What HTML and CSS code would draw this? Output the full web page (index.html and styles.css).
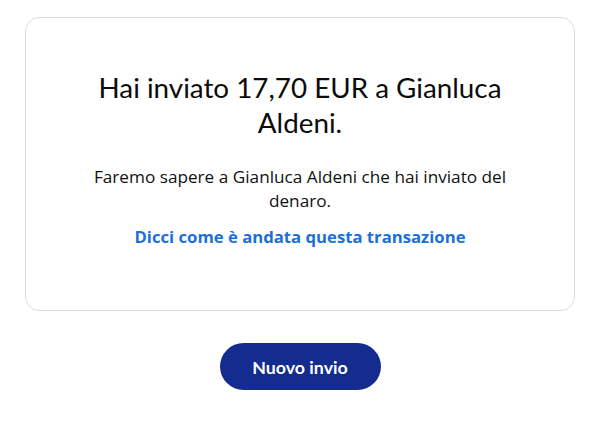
FILE: index.html
```html
<!DOCTYPE html>
<html lang="it">
<head>
<meta charset="utf-8">
<link rel="stylesheet" href="styles.css">
</head>
<body>
<main class="page">
  <section class="card">
    <h1 class="title">Hai inviato 17,70 EUR a Gianluca Aldeni.</h1>
    <p class="text">Faremo sapere a Gianluca Aldeni che hai inviato del denaro.</p>
    <a class="link" href="#">Dicci come è andata questa transazione</a>
  </section>
  <div class="actions">
    <button class="btn" type="button">Nuovo invio</button>
  </div>
</main>
</body>
</html>
```
FILE: styles.css
```css
* { box-sizing: border-box; }
html, body { margin: 0; padding: 0; background: #fff; }
body { font-family: "Open Sans", "Lato", sans-serif; color: #111; }
.page { padding: 17px 25px 0 25px; display: flex; flex-direction: column; }
.card {
  border: 1px solid #dcdcdc;
  border-radius: 14px;
  height: 294px;
  padding: 52px 40px 0 40px;
  display: flex;
  flex-direction: column;
  align-items: center;
  text-align: center;
}
.title {
  margin: 0;
  font-family: "Lato", sans-serif;
  font-size: 27.8px;
  font-weight: 400;
  line-height: 35px;
  max-width: 420px;
  color: #0b0b0b;
}
.text {
  margin: 25px 0 0 0;
  font-size: 17.2px;
  line-height: 24px;
  max-width: 440px;
  color: #111;
}
.link {
  margin-top: 12px;
  font-size: 16.7px;
  font-weight: 700;
  line-height: 24px;
  color: #1d6fd8;
  text-decoration: none;
}
.actions { display: flex; justify-content: center; padding-top: 32px; }
.btn {
  width: 161px;
  height: 47px;
  border: 0;
  border-radius: 24px;
  background: #142c8e;
  color: #fff;
  font-family: "Lato", sans-serif;
  font-weight: 700;
  font-size: 17.8px;
  padding-top: 1px;
}
```
